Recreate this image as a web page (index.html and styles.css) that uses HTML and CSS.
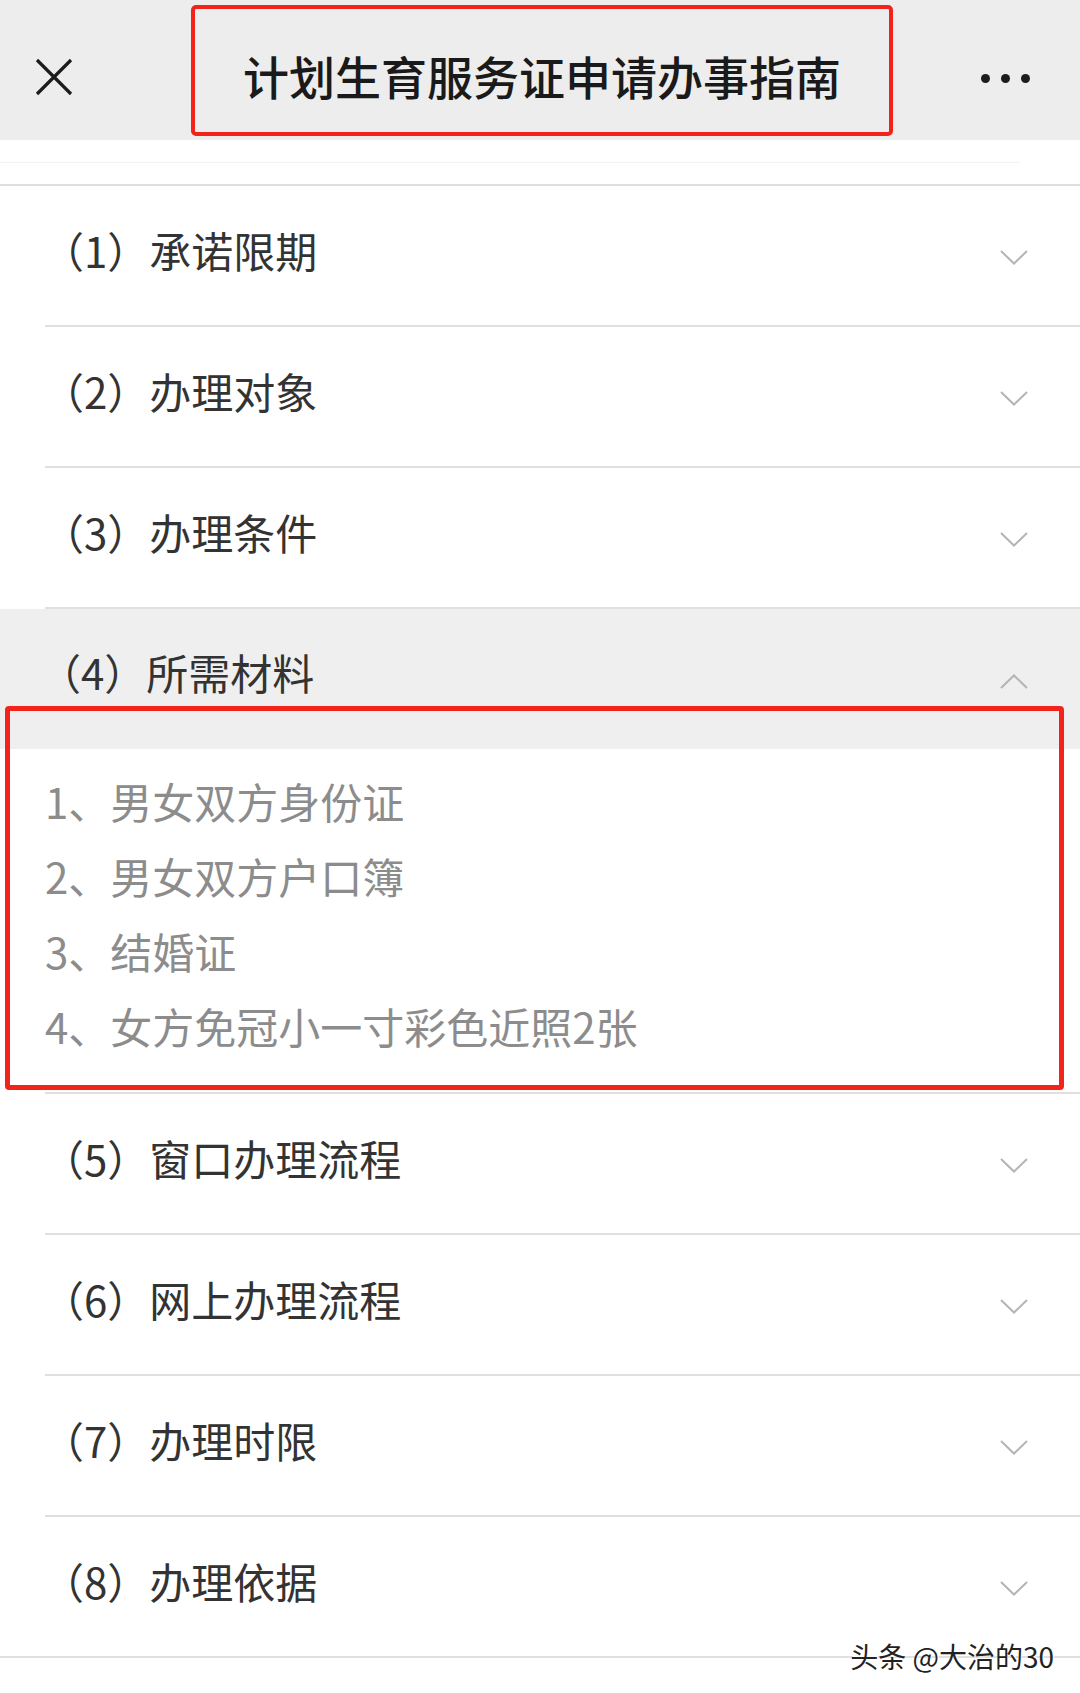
FILE: index.html
```html
<!DOCTYPE html>
<html>
<head>
    <meta charset="utf-8">
    <title>计划生育服务证申请办事指南</title>
    <link rel="stylesheet" href="styles.css">
</head>
<body>
    <div class="topbar">
        <div class="close-btn">
            <svg width="38" height="38" viewBox="0 0 38 38">
                <path d="M2 2 L36 36 M36 2 L2 36" stroke="#1c1c1c" stroke-width="3.2" fill="none"/>
            </svg>
        </div>
        <div class="title-box">计划生育服务证申请办事指南</div>
        <div class="more-btn"><span></span><span></span><span></span></div>
    </div>

    <div class="spacer"><div class="faint-line"></div></div>

    <div class="guide-list">
        <div class="row">
            <span class="row-title">（1）承诺限期</span>
            <svg class="chevron" width="28" height="15" viewBox="0 0 28 15"><path d="M1 1 L14 13.5 L27 1" /></svg>
        </div>
        <div class="row">
            <span class="row-title">（2）办理对象</span>
            <svg class="chevron" width="28" height="15" viewBox="0 0 28 15"><path d="M1 1 L14 13.5 L27 1" /></svg>
        </div>
        <div class="row">
            <span class="row-title">（3）办理条件</span>
            <svg class="chevron" width="28" height="15" viewBox="0 0 28 15"><path d="M1 1 L14 13.5 L27 1" /></svg>
        </div>
        <div class="row-open">
            <div class="row row-head">
                <span class="row-title">（4）所需材料</span>
                <svg class="chevron" width="28" height="15" viewBox="0 0 28 15"><path d="M1 14 L14 1.5 L27 14" /></svg>
            </div>
            <div class="row-body">
                <div>1、男女双方身份证</div>
                <div>2、男女双方户口簿</div>
                <div>3、结婚证</div>
                <div>4、女方免冠小一寸彩色近照2张</div>
            </div>
            <div class="mark-box"></div>
        </div>
        <div class="row">
            <span class="row-title">（5）窗口办理流程</span>
            <svg class="chevron" width="28" height="15" viewBox="0 0 28 15"><path d="M1 1 L14 13.5 L27 1" /></svg>
        </div>
        <div class="row">
            <span class="row-title">（6）网上办理流程</span>
            <svg class="chevron" width="28" height="15" viewBox="0 0 28 15"><path d="M1 1 L14 13.5 L27 1" /></svg>
        </div>
        <div class="row">
            <span class="row-title">（7）办理时限</span>
            <svg class="chevron" width="28" height="15" viewBox="0 0 28 15"><path d="M1 1 L14 13.5 L27 1" /></svg>
        </div>
        <div class="row row-last">
            <span class="row-title">（8）办理依据</span>
            <svg class="chevron" width="28" height="15" viewBox="0 0 28 15"><path d="M1 1 L14 13.5 L27 1" /></svg>
        </div>
    </div>
    <div class="footer">
        <div class="watermark">头条 @大治的30</div>
    </div>
</body>
</html>
```

FILE: styles.css
```css
body {
    margin: 0;
    width: 1080px;
    min-height: 1693px;
    background: #ffffff;
    font-family: "Noto Sans CJK SC", "Noto Sans", sans-serif;
    color: #333333;
}

.topbar {
    height: 140px;
    background: #ededed;
    display: grid;
    grid-template-columns: 191px 702px 1fr;
    align-items: start;
}

.close-btn {
    padding: 58px 0 0 35px;
    height: 38px;
}

.title-box {
    margin-top: 5px;
    height: 131px;
    box-sizing: border-box;
    border: 4px solid #f3221b;
    border-radius: 5px;
    padding-top: 8px;
    display: flex;
    align-items: center;
    justify-content: center;
    font-size: 46px;
    font-weight: 500;
    color: #1a1a1a;
}

.more-btn {
    display: flex;
    justify-content: flex-end;
    gap: 11px;
    padding: 74px 50px 0 0;
}

.more-btn span {
    width: 9px;
    height: 9px;
    border-radius: 50%;
    background: #1c1c1c;
}

.spacer {
    height: 44px;
    padding-top: 22px;
    box-sizing: border-box;
}

.faint-line {
    width: 1020px;
    height: 1px;
    background: #f3f3f3;
}

.guide-list {
    border-top: 2px solid #dedede;
}

.row {
    height: 141px;
    box-sizing: border-box;
    margin-left: 45px;
    padding-right: 52px;
    border-bottom: 2px solid #e0e0e0;
    display: flex;
    align-items: center;
    justify-content: space-between;
}

.row-title {
    font-size: 42px;
    margin-left: -3px;
    margin-bottom: 12px;
    color: #333333;
}

.chevron {
    margin-top: 4px;
}

.chevron path {
    fill: none;
    stroke: #b4b4b4;
    stroke-width: 2;
}

.row-open {
    position: relative;
}

.row-head {
    margin-left: 0;
    padding-left: 42px;
    height: 140px;
    background: #efefef;
    border-bottom: none;
}

.row-head .row-title {
    margin-bottom: 16px;
}

.row-body {
    margin-left: 45px;
    padding: 14px 0 29px 0;
    border-bottom: 2px solid #e0e0e0;
    font-size: 42px;
    line-height: 75px;
    color: #8c8c8c;
}

.mark-box {
    position: absolute;
    left: 5px;
    top: 97px;
    width: 1059px;
    height: 384px;
    box-sizing: border-box;
    border: 5px solid #f3221b;
    border-radius: 4px;
}

.row-last {
    margin-left: 0;
    padding-left: 45px;
}

.footer {
    position: relative;
    height: 36px;
}

.watermark {
    position: absolute;
    right: 26px;
    top: -22px;
    font-size: 28px;
    line-height: 40px;
    color: #222222;
    text-shadow: 1px -1px 0 #ffffff;
}
```
